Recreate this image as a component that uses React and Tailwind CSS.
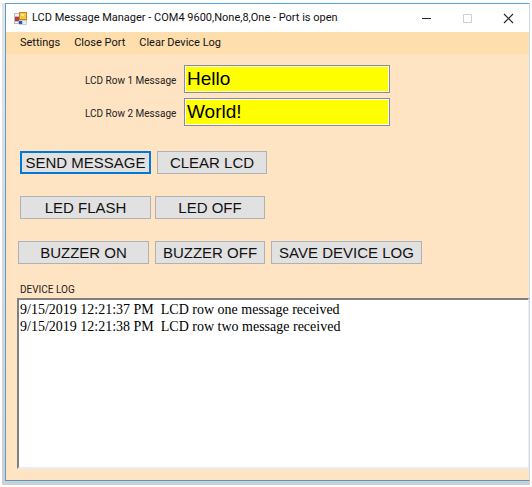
import { useState } from "react";

const BUTTON =
  "h-[23px] border text-[15px] leading-[21px] whitespace-nowrap text-[#111] bg-[#e1e1e1]";

function PushButton({ width, focused, children }) {
  return (
    <button
      type="button"
      className={`${BUTTON} ${width} ${
        focused ? "border-[#0078d7] ring-1 ring-inset ring-[#0078d7]" : "border-[#adb2b5]"
      }`}
    >
      {children}
    </button>
  );
}

function MessageField({ id, label, value, onChange }) {
  return (
    <div className="flex items-center">
      <label
        htmlFor={id}
        className="w-[99px] pt-1 font-[Roboto,sans-serif] text-[10px] leading-4 whitespace-nowrap text-[#222]"
      >
        {label}
      </label>
      <input
        id={id}
        type="text"
        value={value}
        onChange={(e) => onChange(e.target.value)}
        className="h-7 w-[206px] border border-[#8a8c94] bg-[#ffff00] px-[2px] text-[19px] text-black ring-1 ring-inset ring-[#fffff0] outline-none"
      />
    </div>
  );
}

function AppIcon() {
  return (
    <svg width="13" height="13" viewBox="0 0 13 13" aria-hidden="true">
      <rect x="0" y="1" width="8" height="11" fill="#b9bcc4" />
      <rect x="1" y="2" width="4" height="2" fill="#f1f1f3" />
      <rect x="1" y="5" width="4" height="4" fill="#c93434" />
      <rect x="1" y="10" width="3" height="1" fill="#f4f4f4" />
      <rect x="5" y="8" width="8" height="5" fill="#c7cbd5" />
      <rect x="5" y="9" width="3" height="3" fill="#2458b8" />
      <rect x="9" y="9" width="3" height="3" fill="#e9edf5" />
      <rect x="5" y="0" width="8" height="8" fill="#c08a1c" />
      <rect x="6" y="1" width="6" height="6" fill="#f7c63c" />
      <rect x="7" y="2" width="3" height="2" fill="#ffe592" />
    </svg>
  );
}

function TitleBar() {
  return (
    <header className="flex h-7 items-center bg-white pl-2">
      <AppIcon />
      <h1 className="ml-[5px] grow text-[11px] leading-4 whitespace-nowrap text-[#111]">
        LCD Message Manager - COM4 9600,None,8,One - Port is open
      </h1>
      <div className="flex">
        <button type="button" aria-label="Minimize" className="flex w-[41px] justify-center">
          <svg width="11" height="11" viewBox="0 0 11 11" stroke="#222" fill="none">
            <path d="M1 5.5H10" />
          </svg>
        </button>
        <button type="button" aria-label="Maximize" disabled className="flex w-[41px] justify-center">
          <svg width="11" height="11" viewBox="0 0 11 11" stroke="#d0d0d0" fill="none">
            <path d="M1.5 1.5H9.5V9.5H1.5Z" />
          </svg>
        </button>
        <button type="button" aria-label="Close" className="flex w-[41px] justify-center">
          <svg width="11" height="11" viewBox="0 0 11 11" stroke="#222" fill="none" strokeWidth="1.1">
            <path d="M1 1L10 10M10 1L1 10" />
          </svg>
        </button>
      </div>
    </header>
  );
}

export default function App() {
  const [rowOne, setRowOne] = useState("Hello");
  const [rowTwo, setRowTwo] = useState("World!");

  return (
    <div className="bg-white pt-[3px] pr-[2px] pb-[2px] pl-[2px]">
      <div className="bg-gradient-to-b from-[#e6e4e4] to-[#cfcfcf] pb-1 pl-[3px]">
        <main className="border border-t-[#5aa5dc] border-r-[#c8dbe8] border-b-[#4a97d0] border-l-[#5b9bd0] bg-[#ffe4c4] font-['Liberation_Sans',Arial,sans-serif]">
          <div className="font-[Roboto,sans-serif]">
            <TitleBar />
            <nav className="flex h-[22px] items-center gap-[14px] bg-[#ffdead] pl-[14px] text-[11px] leading-4 text-[#111]">
              <button type="button">Settings</button>
              <button type="button">Close Port</button>
              <button type="button">Clear Device Log</button>
            </nav>
          </div>

          <form className="flex flex-col gap-[5px] pt-[11px] pl-[79px]" onSubmit={(e) => e.preventDefault()}>
            <MessageField id="row-one" label="LCD Row 1 Message" value={rowOne} onChange={setRowOne} />
            <MessageField id="row-two" label="LCD Row 2 Message" value={rowTwo} onChange={setRowTwo} />
          </form>

          <div className="flex flex-col pt-[25px] pl-3">
            <div className="flex gap-[6px] pl-[2px]">
              <PushButton width="w-[131px]" focused>SEND MESSAGE</PushButton>
              <PushButton width="w-[110px]">CLEAR LCD</PushButton>
            </div>
            <div className="mt-[22px] flex gap-1 pl-[2px]">
              <PushButton width="w-[131px]">LED FLASH</PushButton>
              <PushButton width="w-[110px]">LED OFF</PushButton>
            </div>
            <div className="mt-[22px] flex gap-[6px]">
              <PushButton width="w-[131px]">BUZZER ON</PushButton>
              <PushButton width="w-[110px]">BUZZER OFF</PushButton>
              <PushButton width="w-[151px]">SAVE DEVICE LOG</PushButton>
            </div>
          </div>

          <div className="flex flex-col pt-[18px] pb-[11px] pl-[11px]">
            <label
              htmlFor="device-log"
              className="pl-[3px] font-[Roboto,sans-serif] text-[10px] leading-4 text-[#222]"
            >
              DEVICE LOG
            </label>
            <textarea
              id="device-log"
              readOnly
              className="block h-[171px] w-full resize-none border-t-2 border-r border-b-2 border-l-2 border-t-[#808080] border-r-[#e8eef3] border-b-[#e8eef3] border-l-[#808080] bg-white px-[1px] pt-[1px] font-['Liberation_Serif','Times_New_Roman',serif] text-[14px] leading-[17px] text-black outline-none"
              value={
                "9/15/2019 12:21:37 PM  LCD row one message received\n9/15/2019 12:21:38 PM  LCD row two message received"
              }
            />
          </div>
        </main>
      </div>
    </div>
  );
}
